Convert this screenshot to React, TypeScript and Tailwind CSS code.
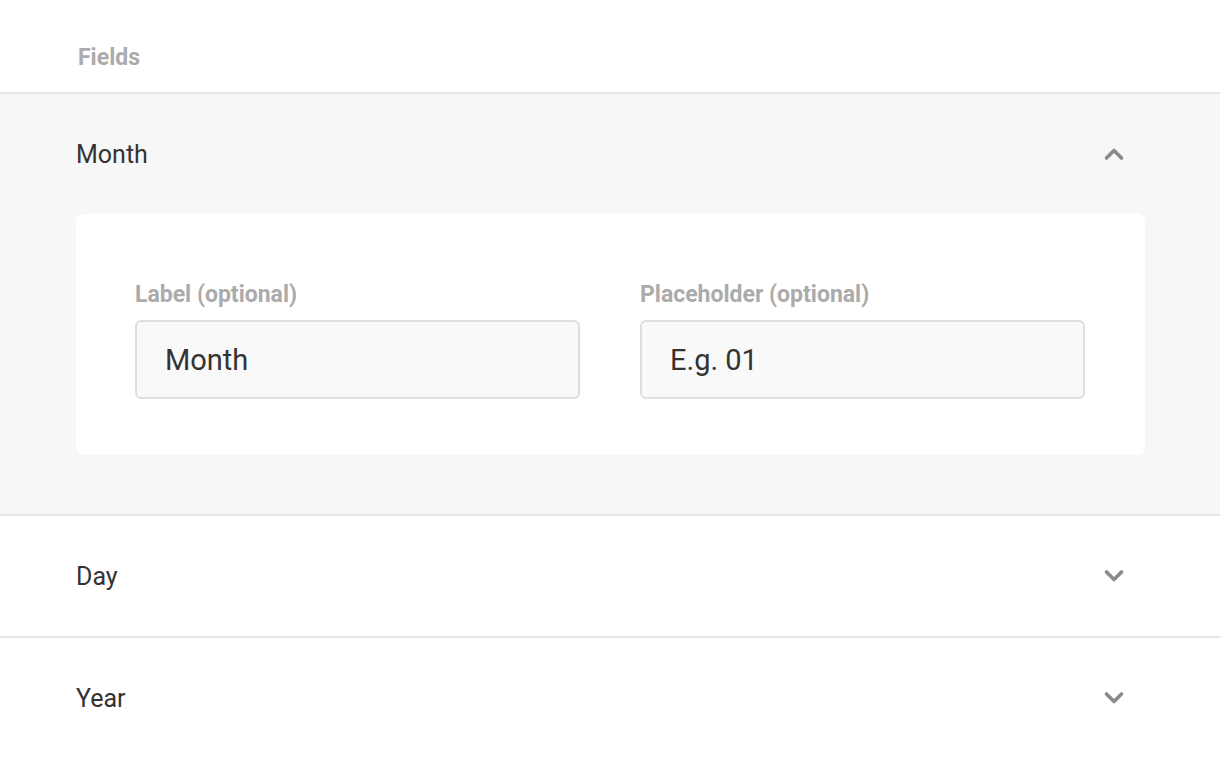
import React from "react";

const Chevron = ({ up }: { up?: boolean }) => (
  <svg width="22" height="14" viewBox="0 0 22 14" className="mr-[19px]">
    <path
      d={up ? "M3.5 11 L11 3.5 L18.5 11" : "M3.5 3 L11 10.5 L18.5 3"}
      fill="none"
      stroke="#8a8a8a"
      strokeWidth="3.6"
      strokeLinecap="round"
      strokeLinejoin="round"
    />
  </svg>
);

export default function App() {
  return (
    <div className="w-[1220px] h-[760px] bg-white overflow-hidden" style={{ fontFamily: "Roboto, 'Liberation Sans', sans-serif" }}>
      <div className="h-[94px] border-b-2 border-[#e6e6e6] pl-[78px] pt-[44px]">
        <div className="text-[23px] leading-[28px] font-bold text-[#ababab]">Fields</div>
      </div>
      <div className="bg-[#f7f7f7] px-[76px] pb-[59px] border-b-2 border-[#e6e6e6]">
        <div className="h-[120px] flex items-center justify-between">
          <span className="text-[25px] text-[#333] pt-[2px]">Month</span>
          <Chevron up />
        </div>
        <div className="bg-white rounded-[8px] pl-[59px] pr-[60px] pt-[67px] pb-[56px] grid grid-cols-2 gap-x-[60px] mr-[-1px]">
          <div className="flex flex-col">
            <label className="text-[23px] leading-[28px] font-bold text-[#ababab] mb-[11px]">Label (optional)</label>
            <div className="h-[79px] rounded-[6px] border-2 border-[#dedede] bg-[#f9f9f9] flex items-center pl-[28px] pt-[2px] text-[29px] text-[#333]">Month</div>
          </div>
          <div className="flex flex-col">
            <label className="text-[23px] leading-[28px] font-bold text-[#ababab] mb-[11px]">Placeholder (optional)</label>
            <div className="h-[79px] rounded-[6px] border-2 border-[#dedede] bg-[#f9f9f9] flex items-center pl-[28px] pt-[2px] text-[29px] text-[#333]">E.g. 01</div>
          </div>
        </div>
      </div>
      <div className="h-[122px] border-b-2 border-[#e6e6e6] px-[76px] flex items-center justify-between">
        <span className="text-[25px] text-[#333] pt-[2px]">Day</span>
        <Chevron />
      </div>
      <div className="h-[120px] px-[76px] flex items-center justify-between">
        <span className="text-[25px] text-[#333] pt-[2px]">Year</span>
        <Chevron />
      </div>
    </div>
  );
}
